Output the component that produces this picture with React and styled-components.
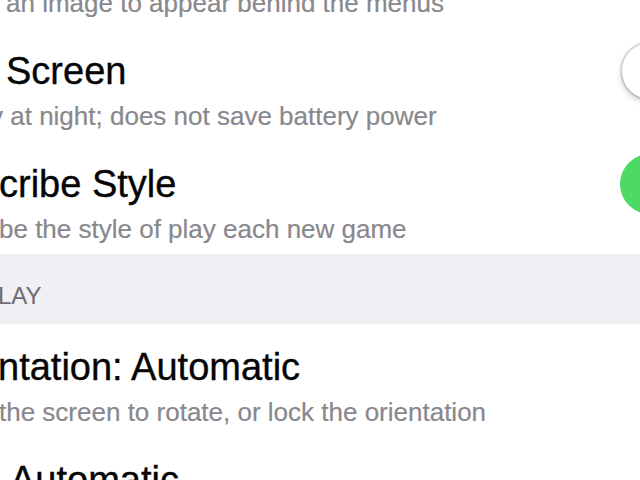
import React from 'react'
import styled, { createGlobalStyle } from 'styled-components'

const GlobalStyle = createGlobalStyle`
  html, body {
    margin: 0;
    padding: 0;
    background: #fff;
    overflow: hidden;
  }
  body {
    font-family: "Liberation Sans", Arial, Helvetica, sans-serif;
  }
`

const Screen = styled.div`
  width: 640px;
  height: 480px;
  overflow: hidden;
  background: #fff;
`

// scrolled part-way down the settings list
const List = styled.div`
  margin-top: -85px;
  display: flex;
  flex-direction: column;
`

const Row = styled.div`
  display: flex;
  flex-direction: column;
  padding: 22px 0 10px;
`

const TitleLine = styled.div`
  display: flex;
  align-items: center;
  height: 42px;
`

const Title = styled.div`
  font-size: 38px;
  line-height: 42px;
  color: #050505;
  -webkit-text-stroke: 0.35px #050505;
  white-space: nowrap;
  margin-left: ${p => p.$shift || 0}px;
`

const Subtitle = styled.div`
  margin-top: 9px;
  font-size: 26px;
  line-height: 30px;
  color: #88888d;
  -webkit-text-stroke: 0.2px #88888d;
  white-space: nowrap;
  margin-left: ${p => p.$shift || 0}px;
`

const SectionHeader = styled.div`
  background: #efeff4;
  padding: 28px 0 14px;
  font-size: 24px;
  line-height: 28px;
  color: #6d6d72;
  white-space: nowrap;

  span {
    display: block;
    margin-left: -2px;
  }
`

const Switch = styled.div`
  position: relative;
  flex: none;
  width: 100px;
  height: 60px;
  margin: -9px -80px -9px auto;
  border-radius: 30px;
  background: ${p => (p.$on ? '#4cd964' : '#fff')};
  box-shadow: ${p => (p.$on ? 'none' : 'inset 0 0 0 2px #e6e6ea')};

  &::after {
    content: '';
    position: absolute;
    top: 2px;
    left: ${p => (p.$on ? '42px' : '2px')};
    width: 56px;
    height: 56px;
    border-radius: 50%;
    background: #fff;
    box-shadow: 0 3px 7px rgba(0, 0, 0, 0.22), 0 0 0 1px rgba(0, 0, 0, 0.06);
  }
`

const SettingRow = ({ title, titleShift, detail, detailShift, toggle }) => (
  <Row>
    <TitleLine>
      <Title $shift={titleShift}>{title}</Title>
      {toggle !== undefined && <Switch $on={toggle} />}
    </TitleLine>
    {detail && <Subtitle $shift={detailShift}>{detail}</Subtitle>}
  </Row>
)

export default function App() {
  return (
    <Screen>
      <GlobalStyle />
      <List>
        <SettingRow
          title="Menu Background"
          detail="an image to appear behind the menus"
          detailShift={6}
        />
        <SettingRow
          title="Screen"
          titleShift={6}
          detail="y at night; does not save battery power"
          detailShift={-10}
          toggle={false}
        />
        <SettingRow
          title="cribe Style"
          titleShift={-1}
          detail="be the style of play each new game"
          detailShift={-1}
          toggle={true}
        />
        <SectionHeader>
          <span>LAY</span>
        </SectionHeader>
        <SettingRow
          title="ntation: Automatic"
          titleShift={-2}
          detail="the screen to rotate, or lock the orientation"
          detailShift={-1}
        />
        <SettingRow title="Automatic" titleShift={10} />
      </List>
    </Screen>
  )
}
